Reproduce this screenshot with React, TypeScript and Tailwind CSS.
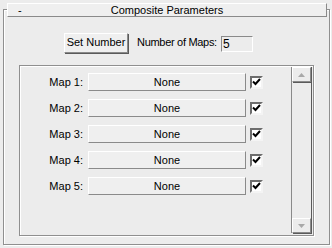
const maps = ['Map 1:', 'Map 2:', 'Map 3:', 'Map 4:', 'Map 5:']

const raised =
  'border border-t-white border-l-white border-r-[#8a8a8a] border-b-[#8a8a8a] shadow-[1px_1px_0_#5a5a5a]'

const CheckBox = () => (
  <div className="w-[13px] h-[13px] bg-white border-2 border-t-[#6d6d6d] border-l-[#6d6d6d] border-r-[#f4f4f4] border-b-[#f4f4f4] flex items-center justify-center">
    <svg width="9" height="8" viewBox="0 0 9 8">
      <path d="M1 3.5 L3.5 6 L8 1" stroke="#000" strokeWidth="2" fill="none" />
    </svg>
  </div>
)

const ScrollArrow = ({ up }: { up?: boolean }) => (
  <div className={`h-[15px] w-full bg-[#ececec] flex items-center justify-center ${raised}`}>
    <svg width="7" height="4" viewBox="0 0 7 4">
      <path d={up ? 'M0 4 L3.5 0 L7 4 Z' : 'M0 0 L3.5 4 L7 0 Z'} fill="#a8a8a8" />
    </svg>
  </div>
)

export default function App() {
  return (
    <div
      className="w-[332px] h-[248px] bg-[#ececec] pt-[9px] pl-[3px] text-[11px] text-black"
      style={{ fontFamily: '"Liberation Sans", Arial, sans-serif' }}
    >
      {/* rollout frame */}
      <div className="relative w-[327px] h-[236px] border border-[#8f8f8f] shadow-[inset_1px_1px_0_#fff,1px_1px_0_#fff]">
        {/* title bar */}
        <div className="absolute left-[3px] -top-[7px] w-[320px] h-[14px] bg-[#efefef] border border-t-white border-l-white border-r-[#8a8a8a] border-b-[#8a8a8a] flex items-center leading-none">
          <span className="ml-[10px] w-[10px]">-</span>
          <span className="flex-1 text-center pr-[20px]">Composite Parameters</span>
        </div>

        {/* set number row */}
        <div className="flex items-center mt-[22px] ml-[60px] h-[21px]">
          <button className={`h-[20px] w-[64px] bg-[#efefef] ${raised} leading-none`}>Set Number</button>
          <span className="ml-[9px] tracking-[-0.3px]">Number of Maps:</span>
          <div className="ml-[4px] mt-[2px] h-[16px] w-[32px] bg-[#ececec] border border-t-[#8a8a8a] border-l-[#8a8a8a] border-r-white border-b-white flex items-center pl-[1px] text-[12px] leading-none">
            5
          </div>
        </div>

        {/* group box */}
        <div className="mt-[12px] ml-[15px] w-[295px] h-[171px] border border-[#8f8f8f] shadow-[inset_1px_1px_0_#fff,1px_1px_0_#fff] flex">
          <div className="flex flex-col gap-[8px] pt-[7px]">
            {maps.map(m => (
              <div key={m} className="flex items-center h-[18px]">
                <span className="w-[64px] text-right pr-[1px]">{m}</span>
                <button className="ml-[4px] w-[158px] h-[18px] bg-[#efefef] border border-t-white border-l-white border-r-[#8a8a8a] border-b-[#8a8a8a] leading-none">
                  None
                </button>
                <div className="ml-[4px]">
                  <CheckBox />
                </div>
              </div>
            ))}
          </div>

          {/* scrollbar */}
          <div className="ml-auto mr-[1px] mt-[1px] mb-[2px] w-[21px] flex flex-col justify-between border-l border-r border-l-[#8a8a8a] border-r-[#5a5a5a]">
            <ScrollArrow up />
            <ScrollArrow />
          </div>
        </div>
      </div>
    </div>
  )
}
